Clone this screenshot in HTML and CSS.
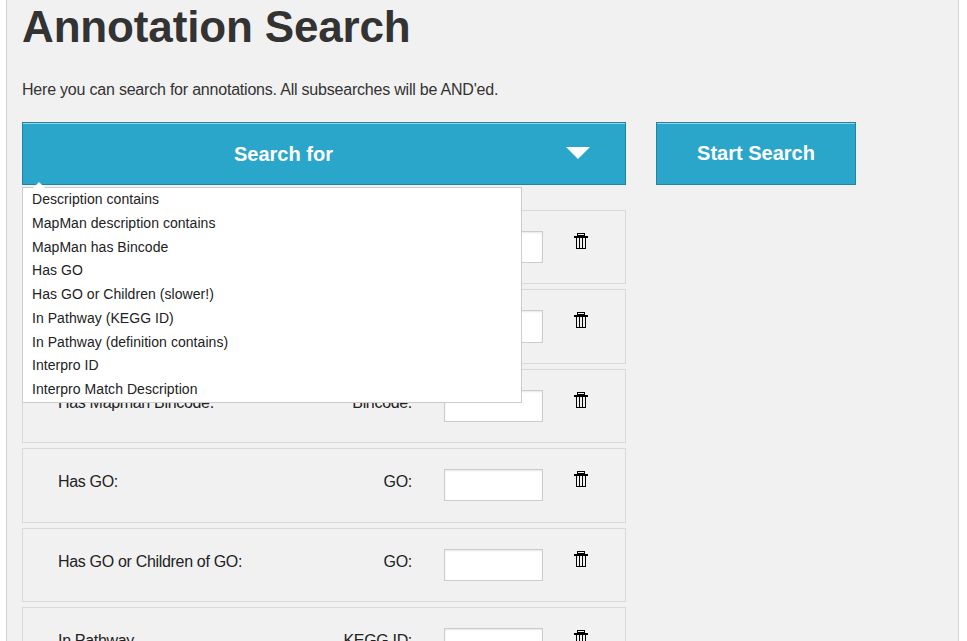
FILE: index.html
```html
<!DOCTYPE html>
<html lang="en">
<head>
<meta charset="utf-8">
<title>Annotation Search</title>
<link rel="stylesheet" href="styles.css">
</head>
<body>
<svg class="symbols" aria-hidden="true">
  <symbol id="trash" viewBox="0 0 14 16">
    <path d="M3 0h8v3h3v2h-2v11H2V5H0V3h3zM4 1v1h6V1zM3 5v10h2V5zM6 5v10h2V5zM9 5v10h2V5z" fill-rule="evenodd"/>
  </symbol>
</svg>
<main class="panel">
  <h1>Annotation Search</h1>
  <p class="intro">Here you can search for annotations. All subsearches will be AND'ed.</p>
  <div class="columns">
    <section class="searches">
      <div class="dropdown">
        <button class="button select" type="button"><span>Search for</span></button>
        <ul class="menu">
          <li>Description contains</li>
          <li>MapMan description contains</li>
          <li>MapMan has Bincode</li>
          <li>Has GO</li>
          <li>Has GO or Children (slower!)</li>
          <li>In Pathway (KEGG ID)</li>
          <li>In Pathway (definition contains)</li>
          <li>Interpro ID</li>
          <li>Interpro Match Description</li>
        </ul>
      </div>
      <div class="rows">
        <div class="row"><span class="name"></span><label></label><input type="text"><svg class="trash"><use href="#trash"/></svg></div>
        <div class="row"><span class="name"></span><label></label><input type="text"><svg class="trash"><use href="#trash"/></svg></div>
        <div class="row"><span class="name">Has Mapman Bincode:</span><label>Bincode:</label><input type="text"><svg class="trash"><use href="#trash"/></svg></div>
        <div class="row"><span class="name">Has GO:</span><label>GO:</label><input type="text"><svg class="trash"><use href="#trash"/></svg></div>
        <div class="row"><span class="name">Has GO or Children of GO:</span><label>GO:</label><input type="text"><svg class="trash"><use href="#trash"/></svg></div>
        <div class="row"><span class="name">In Pathway</span><label>KEGG ID:</label><input type="text"><svg class="trash"><use href="#trash"/></svg></div>
      </div>
    </section>
    <button class="button start" type="button">Start Search</button>
  </div>
</main>
</body>
</html>
```
FILE: styles.css
```css
* { box-sizing: border-box; }
html, body { height: 100%; }
body {
  margin: 0;
  overflow: hidden;
  background: #fff;
  color: #222;
  font-family: "Liberation Sans", Arial, sans-serif;
  font-size: 16px;
}
.symbols { display: none; }
.panel {
  width: 953px;
  height: 641px;
  margin-left: 6px;
  padding: 0 15px;
  overflow: hidden;
  background: #f1f1f1;
  border: solid #d3d3d3;
  border-width: 0 1px;
}
h1 {
  margin: 0;
  height: 77px;
  padding-top: 1px;
  font-size: 44px;
  line-height: 52px;
  letter-spacing: -.15px;
  color: #333;
}
.intro {
  margin: 0;
  height: 45px;
  line-height: 26px;
  letter-spacing: -.21px;
  color: #333;
}
.columns { display: flex; align-items: flex-start; gap: 30px; }
.searches { width: 604px; }
.dropdown { position: relative; }
.button {
  display: block;
  height: 63px;
  padding: 0;
  border: 1px solid #2284a1;
  background: #2ba6cb;
  box-shadow: inset 0 1px 0 rgba(255, 255, 255, .5);
  color: #fff;
  font: bold 20px/61px "Liberation Sans", Arial, sans-serif;
  text-align: center;
}
.select {
  display: flex;
  align-items: center;
  justify-content: space-between;
  width: 100%;
  padding: 0 35px 0 211px;
}
.select span { padding-top: 2px; line-height: 59px; }
.select::after {
  content: "";
  margin-bottom: 2px;
  border: 12px solid transparent;
  border-top-color: #fff;
  border-bottom: 0;
}
.start { width: 200px; }
.menu {
  position: absolute;
  top: 65px;
  left: 0;
  z-index: 1;
  width: 500px;
  height: 216px;
  margin: 0;
  padding: 0 9px;
  list-style: none;
  background: #fff;
  border: 1px solid #ccc;
  font-size: 14px;
  line-height: 23.75px;
  letter-spacing: .05px;
}
.menu::before {
  content: "";
  position: absolute;
  top: -6px;
  left: 10px;
  border: 6px solid transparent;
  border-top: 0;
  border-bottom-color: #fff;
}
.rows {
  display: grid;
  grid-auto-rows: 74.4px;
  gap: 5px;
  margin-top: 25px;
}
.row {
  display: grid;
  grid-template-columns: 254px 100px 99px 14px;
  align-items: start;
  padding: 20px 0 0 35px;
  border: 1px solid #d9d9d9;
  line-height: 24px;
}
.row .name, .row label {
  padding-top: 1px;
  letter-spacing: -.32px;
}
.row label { text-align: right; }
.row input {
  width: 99px;
  height: 32.3px;
  margin-left: 32px;
  border: 1px solid #ccc;
  background: #fff;
  box-shadow: inset 0 1px 2px rgba(0, 0, 0, .1);
}
.trash {
  width: 14px;
  height: 16px;
  margin: 2px 0 0 63px;
}
```
